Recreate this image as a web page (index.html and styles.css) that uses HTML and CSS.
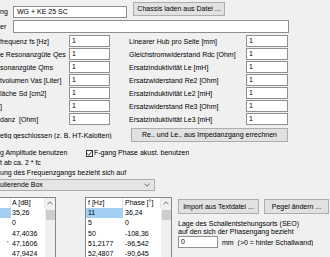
FILE: index.html
```html
<!DOCTYPE html>
<html>
<head>
<meta charset="utf-8">
<link rel="stylesheet" href="styles.css">
</head>
<body>
<div class="dlg">
  <div class="row r-name">
    <span class="lbl l-name">ng</span>
    <div class="tb tb-name">WG + KE 25 SC</div>
    <div class="btn btn-chassis">Chassis laden aus Datei ...</div>
  </div>
  <div class="row r-maker">
    <span class="lbl l-maker">er</span>
    <div class="tb tb-maker"></div>
  </div>
  <div class="params">
    <span class="lbl pl">frequenz fs [Hz]</span><div class="tb">1</div><span class="lbl pr">Linearer Hub pro Seite [mm]</span><div class="tb">1</div>
    <span class="lbl pl">e Resonanzgüte Qes</span><div class="tb">1</div><span class="lbl pr">Gleichstromwiderstand Rdc [Ohm]</span><div class="tb">1</div>
    <span class="lbl pl">sonanzgüte Qms</span><div class="tb">1</div><span class="lbl pr">Ersatzinduktivität Le [mH]</span><div class="tb">1</div>
    <span class="lbl pl">tvolumen Vas [Liter]</span><div class="tb">1</div><span class="lbl pr">Ersatzwiderstand Re2 [Ohm]</span><div class="tb">1</div>
    <span class="lbl pl">läche Sd [cm2]</span><div class="tb">1</div><span class="lbl pr">Ersatzinduktivität Le2 [mH]</span><div class="tb">1</div>
    <span class="lbl pl">]</span><div class="tb">1</div><span class="lbl pr">Ersatzwiderstand Re3 [Ohm]</span><div class="tb">1</div>
    <span class="lbl pl">danz&nbsp;&nbsp;[Ohm]</span><div class="tb">1</div><span class="lbl pr">Ersatzinduktivität Le3 [mH]</span><div class="tb">1</div>
  </div>
  <div class="row r-hint">
    <span class="lbl l-hint">etig geschlossen (z. B. HT-Kalotten)</span>
    <div class="btn btn-calc">Re.. und Le.. aus Impedanzgang errechnen</div>
  </div>
  <div class="row r-chk">
    <span class="lbl l-amp">g Amplitude benutzen</span>
    <span class="chk"><svg width="7" height="7" viewBox="0 0 7 7"><polyline points="1.2,3.6 2.8,5.2 5.9,1.4" fill="none" stroke="#222" stroke-width="0.9"/></svg></span>
    <span class="lbl l-phase">F-gang Phase akust. benutzen</span>
  </div>
  <div class="line">t ab ca. 2 * fc</div>
  <div class="line">ung des Frequenzgangs bezieht sich auf</div>
  <div class="combo">
    <span>ulierende Box</span>
    <svg class="chev" width="6" height="4" viewBox="0 0 6 4"><polyline points="0.5,0.8 3,3.2 5.5,0.8" fill="none" stroke="#444" stroke-width="0.8"/></svg>
  </div>
  <div class="bottom">
    <div class="lv lv-left">
      <div class="grid g-left">
        <div class="hc"></div><div class="hc">A [dB]</div>
        <div class="c sel"></div><div class="c">35,26</div>
        <div class="c"></div><div class="c">0</div>
        <div class="c"></div><div class="c">47,4036</div>
        <div class="c cut">'</div><div class="c">47,1606</div>
        <div class="c"></div><div class="c">47,9424</div>
      </div>
      <div class="sb">
        <div class="sb-up"><svg width="6" height="4" viewBox="0 0 6 4"><polyline points="0.5,3.2 3,0.8 5.5,3.2" fill="none" stroke="#555" stroke-width="0.8"/></svg></div>
        <div class="sb-thumb"></div>
      </div>
    </div>
    <div class="lv lv-right">
      <div class="grid g-right">
        <div class="hc">f [Hz]</div><div class="hc">Phase [°]</div>
        <div class="c sel">11</div><div class="c">36,24</div>
        <div class="c">5</div><div class="c">0</div>
        <div class="c">50</div><div class="c">-108,36</div>
        <div class="c">51,2177</div><div class="c">-96,542</div>
        <div class="c">52,4807</div><div class="c">-90,645</div>
      </div>
      <div class="sb">
        <div class="sb-up"><svg width="6" height="4" viewBox="0 0 6 4"><polyline points="0.5,3.2 3,0.8 5.5,3.2" fill="none" stroke="#555" stroke-width="0.8"/></svg></div>
        <div class="sb-thumb"></div>
      </div>
    </div>
    <div class="side">
      <div class="row btns">
        <div class="btn btn-import">Import aus Textdatei ...</div>
        <div class="btn btn-pegel">Pegel ändern ...</div>
      </div>
      <div class="seo">Lage des Schallentstehungsorts (SEO)<br>auf den sich der Phasengang bezieht</div>
      <div class="row r-seo">
        <div class="tb tb-seo">0</div>
        <span class="lbl l-mm">mm  (&gt;0 = hinter Schallwand)</span>
      </div>
    </div>
  </div>
</div>
</body>
</html>
```
FILE: styles.css
```css
html, body {
  margin: 0;
  padding: 0;
}
body {
  width: 330px;
  height: 257px;
  overflow: hidden;
  background: #f0f0f0;
  font-family: "Liberation Sans", Arial, sans-serif;
  font-size: 7px;
  color: #000;
}
.dlg {
  display: flex;
  flex-direction: column;
}
.row {
  display: flex;
  align-items: flex-start;
}
.lbl {
  white-space: nowrap;
  overflow: hidden;
}
.tb {
  box-sizing: border-box;
  background: #fff;
  border: 1px solid #8f8f8f;
  height: 12px;
  line-height: 10px;
  padding-left: 2px;
  white-space: nowrap;
  overflow: hidden;
}
.btn {
  box-sizing: border-box;
  background: #e1e1e1;
  border: 1px solid #adadad;
  text-align: center;
  white-space: nowrap;
}

/* name row */
.r-name { height: 19px; }
.l-name { width: 13px; margin-top: 6px; line-height: 12px; }
.tb-name { width: 114px; margin-top: 6px; padding-left: 3px; }
.btn-chassis { width: 92px; height: 14px; line-height: 12px; margin-top: 2px; margin-left: 6px; }

/* maker row */
.r-maker { height: 16px; }
.l-maker { width: 13px; margin-top: 1px; line-height: 13px; }
.tb-maker { width: 276px; height: 13px; line-height: 11px; margin-top: 1px; }

/* parameter grid */
.params {
  display: grid;
  grid-template-columns: 69px 41px 136px 42px;
  grid-auto-rows: 13px;
}
.params .lbl { line-height: 13px; }
.params .pr { padding-left: 19px; }

/* hint row */
.r-hint { margin-top: 2px; align-items: center; height: 14px; }
.l-hint { width: 131px; }
.btn-calc { width: 157px; height: 14px; line-height: 12px; }

/* checkbox row */
.r-chk { margin-top: 6px; height: 10px; align-items: center; }
.l-amp { width: 86px; line-height: 10px; }
.chk {
  box-sizing: border-box;
  width: 7px;
  height: 7px;
  border: 1px solid #333;
  background: #fff;
  display: flex;
  align-items: center;
  justify-content: center;
}
.chk svg { display: block; flex: none; }
.l-phase { margin-left: 1px; line-height: 10px; }

.line { height: 10px; line-height: 10px; white-space: nowrap; }

/* combo */
.combo {
  box-sizing: border-box;
  margin-top: 1px;
  width: 155px;
  height: 12px;
  background: #e5e5e5;
  border: 1px solid #adadad;
  border-left: none;
  display: flex;
  align-items: center;
  justify-content: space-between;
  padding-right: 4px;
  line-height: 10px;
}
.chev { display: block; }

/* bottom */
.bottom {
  margin-top: 6px;
  display: flex;
  align-items: flex-start;
}
.lv {
  box-sizing: border-box;
  background: #fff;
  border: 1px solid #828790;
  display: flex;
  height: 70px;
}
.lv-left { width: 56px; border-left: none; }
.lv-right { width: 87px; margin-left: 29px; }
.grid {
  display: grid;
  grid-template-rows: 10px;
  grid-auto-rows: 10.33px;
  align-content: start;
}
.g-left { grid-template-columns: 11px 34px; }
.g-right { grid-template-columns: 37px 38px; }
.hc {
  line-height: 10px;
  padding-left: 1px;
  white-space: nowrap;
  overflow: hidden;
  border-right: 1px solid #e5e5e5;
}
.g-right .hc { padding-left: 2px; }
.c {
  line-height: 10.33px;
  padding-left: 1px;
  white-space: nowrap;
  overflow: hidden;
}
.g-right .c { padding-left: 2px; }
.cut { padding-left: 7px; }
.sel { background: #a3cff3; }
.sb {
  width: 10px;
  background: #f0f0f0;
  display: flex;
  flex-direction: column;
}
.sb-up {
  height: 10px;
  display: flex;
  align-items: center;
  justify-content: center;
}
.sb-up svg { display: block; }
.sb-thumb {
  margin: 2px 0 0 1px;
  height: 10px;
  background: #cdcdcd;
}

/* side panel */
.side {
  margin-left: 6px;
  display: flex;
  flex-direction: column;
}
.btns { margin-top: 2px; gap: 5px; }
.btn-import { width: 81px; height: 15px; line-height: 13px; }
.btn-pegel { width: 65px; height: 15px; line-height: 13px; }
.seo { margin-top: 6px; line-height: 8px; white-space: nowrap; }
.r-seo { align-items: center; margin-top: 0; }
.tb-seo { width: 40px; }
.l-mm { margin-left: 4px; white-space: pre; }
```
